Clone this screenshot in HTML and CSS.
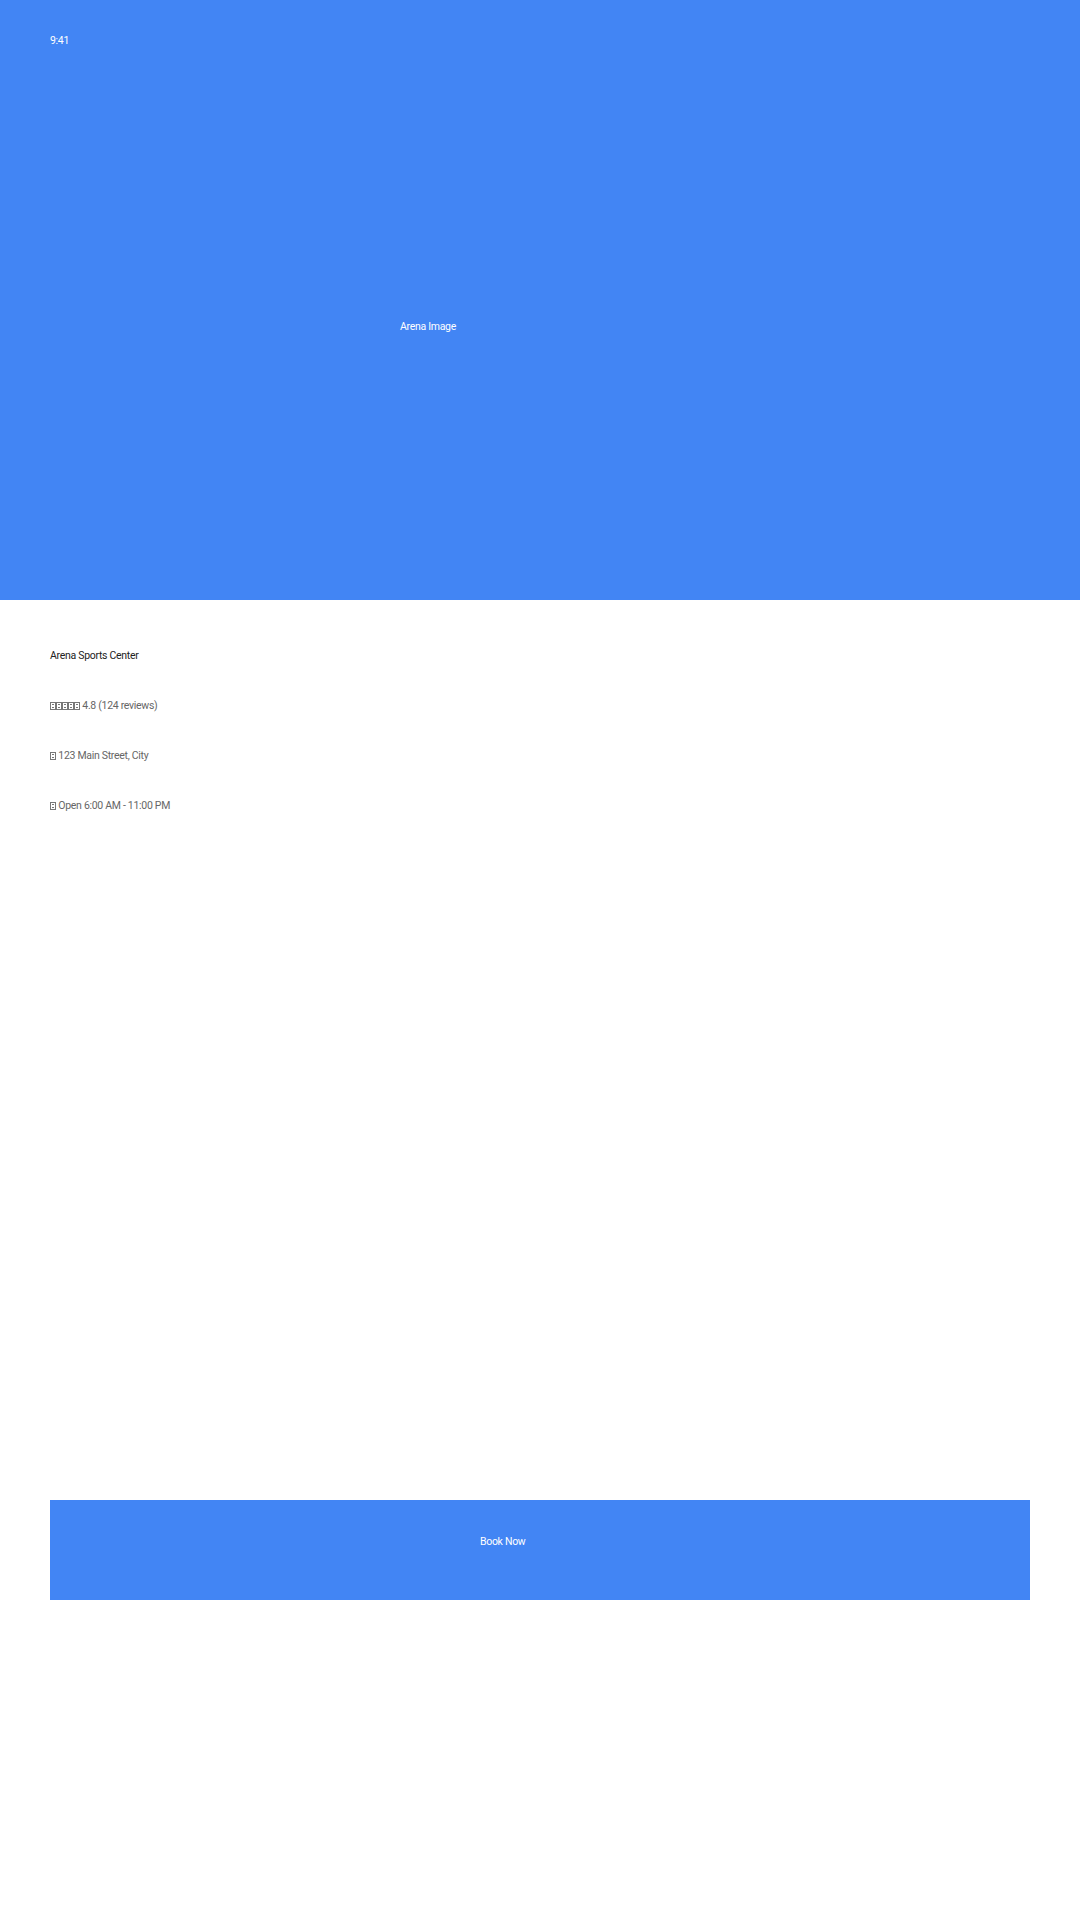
FILE: index.html
```html
<!DOCTYPE html>
<html>
<head>
<meta charset="utf-8">
<link rel="stylesheet" href="styles.css">
</head>
<body>
<div class="screen">
  <div class="hero">
    <div class="status">9:41</div>
    <div class="hero-label">Arena Image</div>
  </div>
  <div class="info">
    <div class="row title">Arena Sports Center</div>
    <div class="row"><span class="tofu" title="star"></span><span class="tofu"></span><span class="tofu"></span><span class="tofu"></span><span class="tofu"></span> 4.8 (124 reviews)</div>
    <div class="row"><span class="tofu" title="pin"></span> 123 Main Street, City</div>
    <div class="row"><span class="tofu" title="clock"></span> Open 6:00 AM - 11:00 PM</div>
  </div>
  <div class="actions">
    <div class="book-btn">Book Now</div>
  </div>
</div>
</body>
</html>
```

FILE: styles.css
```css
html, body {
  margin: 0;
  padding: 0;
  background: #ffffff;
}
.screen {
  width: 1080px;
  height: 1920px;
  display: flex;
  flex-direction: column;
  font-family: Roboto, "Liberation Sans", sans-serif;
  font-size: 10.5px;
  letter-spacing: -0.3px;
}
.hero {
  height: 600px;
  background: #4285F4;
  color: #ffffff;
  display: flex;
  flex-direction: column;
}
.status {
  padding: 33px 50px 0;
  line-height: 16px;
}
.hero-label {
  padding: 270px 0 0 400px;
  line-height: 16px;
}
.info {
  flex: 1;
  padding: 31px 50px 0;
  display: flex;
  flex-direction: column;
}
.row {
  line-height: 50px;
  color: #666666;
}
.row.title {
  color: #222222;
}
.tofu {
  display: inline-block;
  width: 4px;
  height: 6px;
  border: 1px solid #777777;
  margin-right: 0;
  vertical-align: -1px;
  background:
    linear-gradient(#777777, #777777) 1px 1px / 2px 1px no-repeat,
    linear-gradient(#777777, #777777) 1px 4px / 2px 1px no-repeat;
}
.actions {
  padding: 0 50px 320px;
}
.book-btn {
  height: 100px;
  background: #4285F4;
  color: #ffffff;
  padding: 34px 0 0 430px;
  line-height: 16px;
  box-sizing: border-box;
}
```
